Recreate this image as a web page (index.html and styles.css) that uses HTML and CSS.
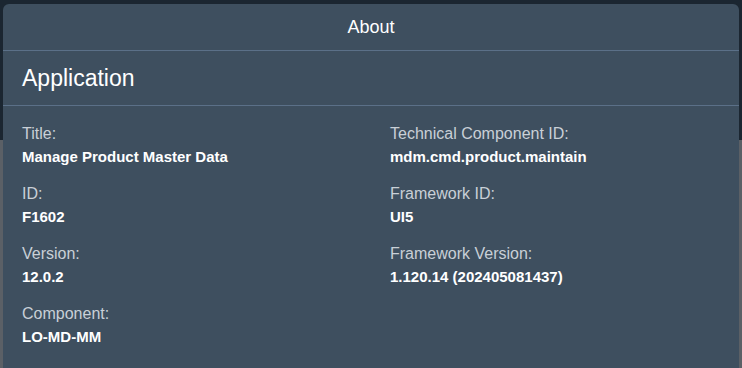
FILE: index.html
```html
<!DOCTYPE html>
<html>
<head>
<title>About</title>
<meta charset="utf-8" />
<link rel="stylesheet" href="styles.css">
</head>
<body>

<div class="backdrop">
<div class="dialog">
	<div class="dlgheader">About</div>
	<div class="section">Application</div>
	<div class="fields">
		<div class="col">
			<div class="field">
				<div class="label">Title:</div>
				<div class="value">Manage Product Master Data</div>
			</div>
			<div class="field">
				<div class="label">ID:</div>
				<div class="value">F1602</div>
			</div>
			<div class="field">
				<div class="label">Version:</div>
				<div class="value">12.0.2</div>
			</div>
			<div class="field">
				<div class="label">Component:</div>
				<div class="value">LO-MD-MM</div>
			</div>
		</div>
		<div class="col">
			<div class="field">
				<div class="label">Technical Component ID:</div>
				<div class="value">mdm.cmd.product.maintain</div>
			</div>
			<div class="field">
				<div class="label">Framework ID:</div>
				<div class="value">UI5</div>
			</div>
			<div class="field">
				<div class="label">Framework Version:</div>
				<div class="value">1.120.14 (202405081437)</div>
			</div>
		</div>
	</div>
</div>
</div>

</body>
</html>
```
FILE: styles.css
```css
body {
	margin: 0;
	background-color: #1b2631;
	font-family: "Liberation Sans", Arial, sans-serif;
}
.backdrop {
	height: 368px;
	padding: 4px 3px 0 3px;
	box-sizing: border-box;
	overflow: hidden;
	background: linear-gradient(to bottom, #1b2631 0, #1b2631 140px, #5b6066 140px);
}
.dialog {
	height: 400px;
	background-color: #3e4f5f;
	border-radius: 6px 6px 0 0;
	color: #ffffff;
}
.dlgheader {
	height: 46px;
	line-height: 46px;
	text-align: center;
	font-size: 18px;
	border-bottom: 1px solid #5b7088;
}
.section {
	height: 54px;
	line-height: 54px;
	padding: 0 19px;
	font-size: 23px;
	border-bottom: 1px solid #5b7088;
}
.fields {
	display: grid;
	grid-template-columns: 368px 1fr;
	padding: 16px 19px 0 19px;
}
.field {
	margin-bottom: 14px;
}
.label {
	font-size: 16px;
	line-height: 23px;
	color: #c9d0d7;
}
.value {
	font-size: 15px;
	line-height: 23px;
	font-weight: bold;
	color: #ffffff;
}
```
